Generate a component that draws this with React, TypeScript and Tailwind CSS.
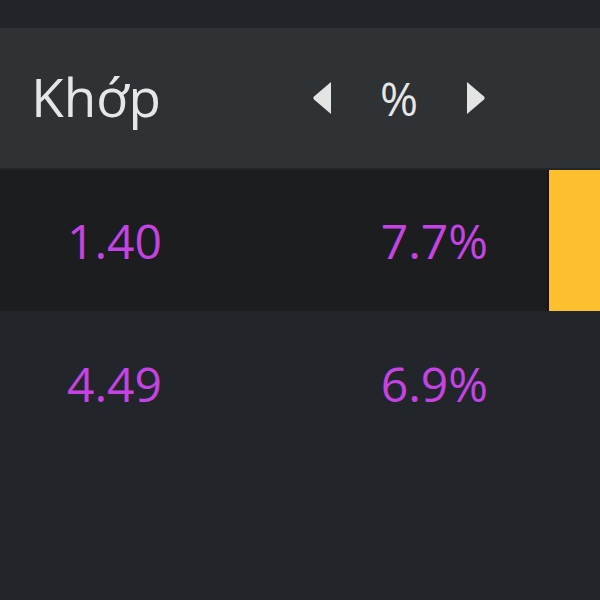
import React from 'react';

const rows = [
  { price: '1.40', pct: '7.7%', active: true },
  { price: '4.49', pct: '6.9%', active: false },
];

function Arrow({ dir }: { dir: 'left' | 'right' }) {
  return (
    <svg width="20" height="34" viewBox="0 0 20 34" className="block">
      {dir === 'left' ? (
        <path d="M19 1 L19 33 L2 18.5 Q0.5 17 2 15.5 Z" fill="#e4e4e4" />
      ) : (
        <path d="M1 1 L1 33 L18 18.5 Q19.5 17 18 15.5 Z" fill="#e4e4e4" />
      )}
    </svg>
  );
}

export default function App() {
  return (
    <div
      className="w-[600px] h-[600px] bg-[#22262a] overflow-hidden"
      style={{ fontFamily: '"Open Sans", "Noto Sans", sans-serif' }}
    >
      <div className="h-[28px] bg-[#212428]" />

      <div className="h-[140px] bg-[#2e3234] flex items-center">
        <div className="w-[161px] text-right text-[53px] text-[#e6e6e6] leading-none pb-1">Khớp</div>
        <div className="ml-[151px] w-[174px] flex items-center justify-between">
          <Arrow dir="left" />
          <span className="text-[46px] text-[#e6e6e6] leading-none">%</span>
          <Arrow dir="right" />
        </div>
      </div>

      <div className="flex flex-col gap-[2px] pt-[2px]">
        {rows.map((r, i) => (
          <div key={i} className="h-[141px] flex items-stretch">
            <div className={`flex-1 flex items-center ${r.active ? 'bg-[#1b1d1f]' : ''}`}>
              <div className="w-[162px] text-right text-[48px] text-[#c443e2] leading-none">{r.price}</div>
              <div className="w-[326px] text-right text-[48px] text-[#c443e2] leading-none">{r.pct}</div>
            </div>
            <div className={`w-[53px] ${r.active ? 'bg-[#fcbf2d] border-l-2 border-[#141414]' : ''}`} />
          </div>
        ))}
      </div>
    </div>
  );
}
